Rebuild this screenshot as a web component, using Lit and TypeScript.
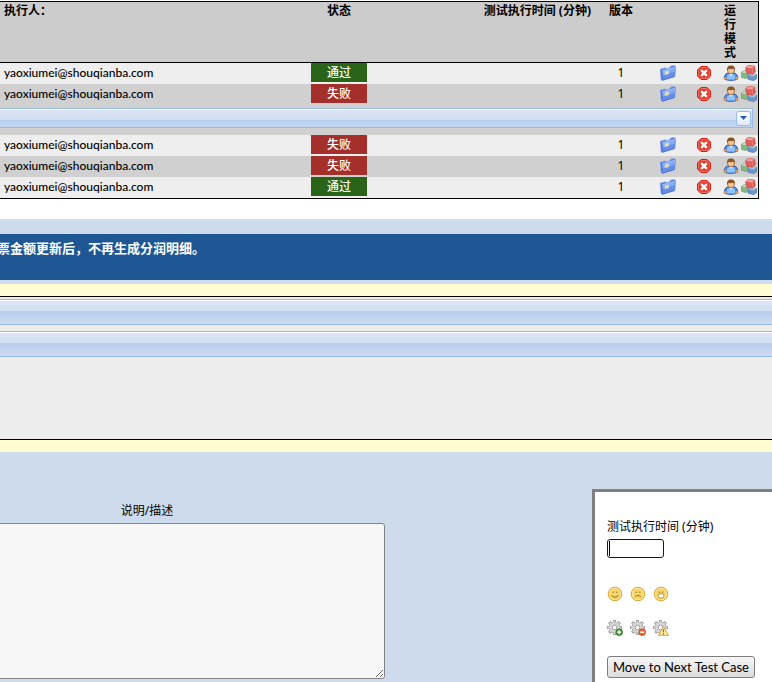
import { LitElement, html, css, svg } from "lit";
import { customElement, property } from "lit/decorators.js";

type Status = "passed" | "failed";

interface Execution {
  tester: string;
  status: Status;
  version: number;
  notes?: boolean;
}

const STATUS_TEXT: Record<Status, string> = { passed: "通过", failed: "失败" };

const EXECUTIONS: Execution[] = [
  { tester: "yaoxiumei@shouqianba.com", status: "passed", version: 1 },
  { tester: "yaoxiumei@shouqianba.com", status: "failed", version: 1, notes: true },
  { tester: "yaoxiumei@shouqianba.com", status: "failed", version: 1 },
  { tester: "yaoxiumei@shouqianba.com", status: "failed", version: 1 },
  { tester: "yaoxiumei@shouqianba.com", status: "passed", version: 1 },
];

const face = (mouth: unknown) => svg`
  <circle cx="8" cy="8" r="6.8" fill="#f3cf58" stroke="#d9a136"/>
  <circle cx="8" cy="8" r="5.7" fill="#f6d766" stroke="#fbeaa6" stroke-width=".9"/>
  <path d="M6.200 5.600v1.300M9.800 5.600v1.300" stroke="#8a6520" stroke-width="1"/>
  ${mouth}`;

const gear = (badge: unknown) => svg`
  <g stroke="#9a9a9a" stroke-width="3.200">
    <path d="M7.500 0v15M0 7.500h15M2.200 2.200l10.600 10.600M12.800 2.200 2.200 12.800"/>
  </g>
  <circle cx="7.500" cy="7.500" r="5.600" fill="#a0a0a0"/>
  <g stroke="#d6d6d6" stroke-width="1.800">
    <path d="M7.500 .8v13.400M.8 7.500h13.400M2.800 2.800l9.400 9.400M12.200 2.800l-9.400 9.400"/>
  </g>
  <circle cx="7.500" cy="7.500" r="4.900" fill="#d6d6d6"/>
  <circle cx="7.500" cy="7.500" r="2.300" fill="#fff" stroke="#959595" stroke-width=".9"/>
  ${badge}`;

const GLYPHS: Record<string, unknown> = {
  folder: svg`
    <path d="M0 4.200 4.500 2.800l2.500.6L10 2.400l.5-1.400 3.500-.8 2 1.600-1 9.800L2 15.600.9 14z" fill="#5f86e0" stroke="#9fb5ee" stroke-width=".6"/>
    <path d="M1.800 5.800 15.600 2.200 14.500 11.500 2.300 15.200z" fill="#668ee8"/>
    <path d="M1.800 5.800 15.600 2.200 15.100 6.500 2 10.300z" fill="#83a9f4"/>
    <path d="M1.800 5.900 15.500 2.300" stroke="#b4cbfa" stroke-width=".7"/>
    <path d="M.6 4.600 1.800 6l.4 9" fill="none" stroke="#4a6cc8" stroke-width=".9"/>
    <path d="M2.400 15.200 14.500 11.500" stroke="#4a6cc8" stroke-width=".8"/>
    <path d="M4.700 6.300 9 5.200v3.900L4.700 10.300z" fill="#b9d2f6"/>
    <path d="M5.200 6.900 8.300 6.100v2.500L5.200 9.500z" fill="#f5dc82"/>`,
  remove: svg`
    <path d="M5 1.500h6L14.500 5v6L11 14.500H5L1.500 11V5z" fill="#e63a2c" stroke="#d31f17"/>
    <path d="M5.300 2.500h5.400l2.800 2.800v5.400l-2.800 2.800H5.300l-2.800-2.800V5.300z" fill="none" stroke="#f58a7e" stroke-width=".7"/>
    <path d="M5.200 5.200l5.600 5.600M10.800 5.200l-5.600 5.600" stroke="#fff" stroke-width="2.400"/>`,
  user: svg`
    <path d="M1.800 14c-1-2 0-5 2.700-6h7c2.700 1 3.700 4 2.700 6-1.500 1.700-10.900 1.700-12.400 0z" fill="#4f92e8" stroke="#2b55a8"/>
    <path d="M4.500 9.500h7l.8 5h-8.600z" fill="#8fc3fb"/>
    <path d="M6 8.500 8 11l2-2.500z" fill="#dfeefe"/>
    <circle cx="2.200" cy="13.300" r="1.300" fill="#eab27a" stroke="#b5713a" stroke-width=".6"/>
    <circle cx="13.800" cy="13.300" r="1.300" fill="#eab27a" stroke="#b5713a" stroke-width=".6"/>
    <circle cx="8" cy="5.200" r="3.500" fill="#f3c896" stroke="#a2602a" stroke-width=".8"/>
    <path d="M4.100 5.600C3.700 1.700 5.500.6 8 .6s4.300 1.100 3.900 5C10.900 5 11 3.900 10.500 3.500 9 4.500 6.500 4.300 5.500 3.700c-.4.600-.5 1.400-1.400 1.900z" fill="#8a5426"/>`,
  cubes: svg`
    <path d="M.5 7.200 3.600 5.600l4 1v5.200l-2.700 1.800L.5 12.300z" fill="#86b883" stroke="#6a9a68" stroke-width=".7"/>
    <path d="M.6 7.200 3.600 5.600l4 1-2.800 1.700z" fill="#bcdcb8"/>
    <path d="M7 10l2.500-1.500 6 1v4.300l-2.800 1.800L7 14.300z" fill="#6c98c8" stroke="#4f76a8" stroke-width=".7"/>
    <path d="M7 10l2.500-1.500 5.900 1-2.900 1.700z" fill="#a9c7e8"/>
    <path d="M4.600 2.700 7 .6l6.400.4 1 5.600-2.700 2.600-5.900-.8z" fill="#e0605c" stroke="#c64643" stroke-width=".7" stroke-linejoin="round"/>
    <path d="M4.800 2.600 7.200.8l5.900.4-2.100 2.200z" fill="#f3a09d"/>
    <path d="M11.100 3.400l.6 5" stroke="#f08a86" stroke-width=".7"/>`,
  smile: face(svg`<path d="M4.500 9.200c1.300 2.600 5.700 2.600 7 0" fill="none" stroke="#94691c" stroke-width="1"/>`),
  sad: face(svg`<path d="M5 11.200c1-2.200 5-2.200 6 0" fill="none" stroke="#94691c" stroke-width="1"/>`),
  grin: face(svg`<rect x="5.300" y="7.900" width="5.400" height="4" rx="1.500" fill="#fff" stroke="#a87a2c" stroke-width=".8"/>`),
  gearAdd: gear(svg`
    <circle cx="12.200" cy="12.200" r="3.300" fill="#4b9a3c" stroke="#2f7a28"/>
    <path d="M12.200 10.200v4M10.200 12.200h4" stroke="#fff" stroke-width="1.300"/>`),
  gearDelete: gear(svg`
    <circle cx="12.200" cy="12.200" r="3.300" fill="#ea6a34" stroke="#c9501f"/>
    <path d="M10.200 12.200h4" stroke="#fff" stroke-width="1.400"/>`),
  gearError: gear(svg`
    <path d="M10.500 6.600 15.500 15.400H5.500z" fill="#fdeaa0" stroke="#dba548" stroke-linejoin="round"/>
    <path d="M10.500 9.300v3M10.500 13.100v1.300" stroke="#8a6a28" stroke-width="1.100"/>`),
};

@customElement("ui-icon")
export class UiIcon extends LitElement {
  @property() name = "";

  static styles = css`
    :host { display: block; width: 16px; height: 16px; }
    .glyph { display: block; width: 16px; height: 16px; }
  `;

  render() {
    return html`<svg class="glyph" viewBox="0 0 16 16" aria-hidden="true">${GLYPHS[this.name]}</svg>`;
  }
}

@customElement("app-root")
export class AppRoot extends LitElement {
  static styles = css`
    :host {
      display: block;
      overflow: hidden;
      min-height: 100vh;
      box-sizing: border-box;
      padding-top: 1px;
      background: #fff;
      color: #000;
      font: 12px/14px "Noto Sans", "Noto Sans CJK SC", sans-serif;
    }
    .history {
      width: calc(100% - 13px);
      table-layout: fixed;
      border-collapse: separate;
      border-spacing: 0;
      border: solid #000;
      border-width: 1px 1px 1px 0;
      margin-bottom: 20px;
    }
    .history th, .history td { padding: 0; }
    .history th {
      padding: 2px 4px;
      background: #ccc;
      border-bottom: 1px solid #000;
      vertical-align: top;
      text-align: center;
      font-weight: bold;
    }
    .history th.first { text-align: left; }
    .history th.time { padding-right: 6px; text-align: right; }
    .history th.mode { padding: 2px; text-align: left; }
    .mode-label { display: block; width: 12px; }
    .w-status { width: 58px; }
    .w-time { width: 229px; }
    .w-version { width: 48px; }
    .w-folder { width: 46px; }
    .w-delete { width: 26px; }
    .w-gap { width: 5px; }
    .w-icon { width: 18px; }
    .odd { background: #eee; }
    .even { background: #d0d0d0; }
    .history td { height: 19px; padding-bottom: 2px; }
    .history td.tester {
      padding-left: 4px;
      font-family: Lato, "Noto Sans CJK SC", sans-serif;
      font-weight: 500;
    }
    .history td.version { text-align: center; }
    .history td ui-icon { margin-left: 1px; }
    .history .icon-button ui-icon { margin-left: 0; }
    .badge {
      margin: 0 1px;
      line-height: 19px;
      text-align: center;
      color: #fff;
      font-weight: 500;
    }
    .passed { background: #2a6418; }
    .failed { background: #a52f2a; }
    .icon-button {
      display: block;
      margin: 0 auto;
      padding: 0;
      border: 0;
      background: none;
      cursor: pointer;
    }
    .history td.notes { padding: 3px 5px 7px 0; height: 20px; }
    .bar {
      box-sizing: border-box;
      display: flex;
      align-items: center;
      justify-content: flex-end;
      height: 26px;
      border: solid #99bbe8;
      border-width: 1px 0;
      box-shadow: inset 0 1px #fff;
      background: linear-gradient(#dde5f5, #cfdef0 46%, #b8cdec 46%, #cddcf2);
    }
    .bar.compact {
      height: 20px;
      padding-right: 1px;
      border-right-width: 1px;
      background: linear-gradient(#dde5f5, #cfdef0 60%, #b4cdf0 60%, #b8cfee 66%, #c3d5ef);
    }
    .toggle {
      width: 15px;
      height: 15px;
      padding: 0;
      display: grid;
      place-items: center;
      border: 1px solid #99bbe8;
      border-radius: 3px;
      background: linear-gradient(#fff, #eef4fd 60%, #dfe9f8);
    }
    .arrow { display: block; width: 7px; height: 4px; }
    .execution { padding-top: 15px; background: #cedbec; min-height: 463px; box-sizing: border-box; }
    .title {
      margin: 0 0 4px;
      min-height: 46px;
      box-sizing: border-box;
      padding-top: 5px;
      text-indent: -3px;
      background: #1f5694;
      color: #fff;
      font-size: 13px;
      line-height: 18px;
      font-weight: bold;
      white-space: nowrap;
    }
    .case { padding: 12px 0; background: #fffdd0; }
    .case-body {
      display: flex;
      flex-direction: column;
      gap: 6px;
      min-height: 144px;
      box-sizing: border-box;
      padding-top: 2px;
      border: solid #000;
      border-width: 1px 0;
      background: #ededed;
    }
    .entry {
      display: flex;
      justify-content: space-between;
      align-items: flex-start;
      padding-top: 37px;
    }
    .notes-field {
      display: flex;
      flex-direction: column;
      gap: 5px;
      width: 476px;
      margin-left: -91px;
      padding-top: 15px;
      text-align: center;
    }
    .notes-field textarea {
      box-sizing: border-box;
      height: 156px;
      margin: 0;
      border: 1px solid #858585;
      border-radius: 3px;
      background: #f7f7f7;
    }
    .panel {
      box-sizing: border-box;
      width: 180px;
      min-height: 210px;
      flex: none;
      padding: 28px 0 0 12px;
      border: solid gray;
      border-width: 3px 0 0 3px;
      background: #fff;
    }
    .panel label { display: block; margin-bottom: 5px; }
    .panel input {
      display: block;
      box-sizing: border-box;
      width: 57px;
      height: 19px;
      margin-bottom: 28px;
      padding: 1px 2px;
      border: 1px solid #101828;
      border-radius: 3px;
      background: linear-gradient(#000, #000) 1px 1px / 1px 15px no-repeat #fff;
    }
    .results { display: flex; gap: 7px; margin-bottom: 18px; }
    .results .icon-button { margin: 0; }
    .next {
      margin: 2px 0 0;
      height: 22px;
      padding: 0 5px;
      border: 1px solid #7d7d7d;
      border-radius: 3px;
      background: linear-gradient(#f6f6f6, #dcdcdc);
      color: #000;
      font: 13px/14px Lato, sans-serif;
      white-space: nowrap;
    }
  `;

  private iconButton(name: string, label: string) {
    return html`<button class="icon-button" type="button" aria-label=${label}><ui-icon name=${name}></ui-icon></button>`;
  }

  private row(item: Execution, index: number) {
    const shade = index % 2 ? "even" : "odd";
    return html`
      <tr class=${shade}>
        <td class="tester">${item.tester}</td>
        <td><div class="badge ${item.status}">${STATUS_TEXT[item.status]}</div></td>
        <td></td>
        <td class="version">${item.version}</td>
        <td>${this.iconButton("folder", "Notes")}</td>
        <td>${this.iconButton("remove", "Delete")}</td>
        <td></td>
        <td><ui-icon name="user"></ui-icon></td>
        <td><ui-icon name="cubes"></ui-icon></td>
      </tr>
      ${item.notes
        ? html`<tr class=${shade}>
            <td class="notes" colspan="9">
              <div class="bar compact">
                <button class="toggle" type="button" aria-label="Expand">
                  <svg class="arrow" viewBox="0 0 7 4"><path d="M0 0h7L3.500 4z" fill="#2c5aa8" /></svg>
                </button>
              </div>
            </td>
          </tr>`
        : ""}
    `;
  }

  render() {
    return html`
      <table class="history">
        <colgroup>
          <col /><col class="w-status" /><col class="w-time" /><col class="w-version" />
          <col class="w-folder" /><col class="w-delete" /><col class="w-gap" />
          <col class="w-icon" /><col class="w-icon" />
        </colgroup>
        <thead>
          <tr>
            <th class="first">执行人：</th>
            <th>状态</th>
            <th class="time">测试执行时间 (分钟)</th>
            <th>版本</th>
            <th></th>
            <th></th>
            <th class="mode"></th>
            <th class="mode" colspan="2"><span class="mode-label">运行模式</span></th>
          </tr>
        </thead>
        <tbody>${EXECUTIONS.map((item, i) => this.row(item, i))}</tbody>
      </table>
      <main class="execution">
        <h1 class="title">票金额更新后，不再生成分润明细。</h1>
        <section class="case">
          <div class="case-body">
            <div class="bar"></div>
            <div class="bar"></div>
          </div>
        </section>
        <form class="entry">
          <div class="notes-field">
            <label for="notes">说明/描述</label>
            <textarea id="notes"></textarea>
          </div>
          <div class="panel">
            <label for="duration">测试执行时间 (分钟)</label>
            <input id="duration" type="text" />
            <div class="results">
              ${this.iconButton("smile", "Passed")}
              ${this.iconButton("sad", "Failed")}
              ${this.iconButton("grin", "Blocked")}
            </div>
            <div class="results">
              ${this.iconButton("gearAdd", "Pass and next")}
              ${this.iconButton("gearDelete", "Fail and next")}
              ${this.iconButton("gearError", "Block and next")}
            </div>
            <button class="next" type="button">Move to Next Test Case</button>
          </div>
        </form>
      </main>
    `;
  }
}
